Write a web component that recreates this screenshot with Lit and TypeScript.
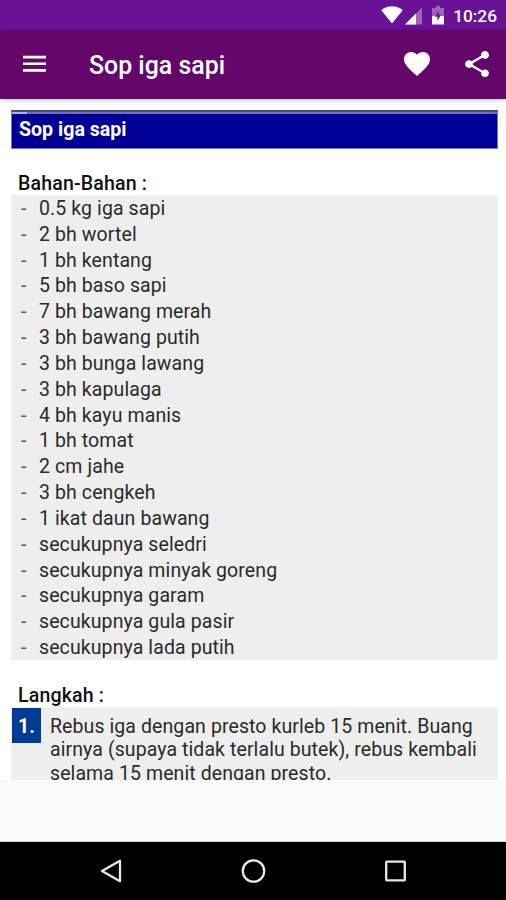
import { LitElement, html, css } from "lit";
import { customElement } from "lit/decorators.js";

const INGREDIENTS = [
  "0.5 kg iga sapi",
  "2 bh wortel",
  "1 bh kentang",
  "5 bh baso sapi",
  "7 bh bawang merah",
  "3 bh bawang putih",
  "3 bh bunga lawang",
  "3 bh kapulaga",
  "4 bh kayu manis",
  "1 bh tomat",
  "2 cm jahe",
  "3 bh cengkeh",
  "1 ikat daun bawang",
  "secukupnya seledri",
  "secukupnya minyak goreng",
  "secukupnya garam",
  "secukupnya gula pasir",
  "secukupnya lada putih",
];

const STEP_LINES = [
  "Rebus iga dengan presto kurleb 15 menit. Buang",
  "airnya (supaya tidak terlalu butek), rebus kembali",
  "selama 15 menit dengan presto.",
];

@customElement("status-bar")
class StatusBar extends LitElement {
  static styles = css`
    :host {
      display: flex;
      justify-content: flex-end;
      align-items: center;
      height: 30px;
      box-sizing: border-box;
      padding: 2px 9px 0 0;
      background: #6a1296;
      color: #fff;
    }
    svg { display: block; fill: #fff; }
    .wifi { margin: 0 2px 2px 0; }
    .signal { margin: 0 10px 0 0; }
    .battery { margin: 0 9px 2px 0; }
    .time { font-size: 17.300px; font-weight: 500; line-height: 28px; }
  `;
  render() {
    return html`
      <svg class="wifi" width="22" height="18" viewBox="0 0 22 18">
        <path d="M0.3 4.300C3 1.800 7 .3 11 .3S19 1.800 21.700 4.300L11 17.500z" />
      </svg>
      <svg class="signal" width="17" height="18" viewBox="0 0 17 18">
        <path d="M17 .5V17.500H0z" opacity=".35" />
        <path d="M11 6.500V17.500H0z" />
      </svg>
      <svg class="battery" width="12" height="19" viewBox="0 0 12 19">
        <path d="M4 0h4v2h4v8H0V2h4z" opacity=".35" />
        <path d="M0 10h12v8.500H0z" />
        <path d="M7 4.500L3 10.800H5.500V15L9 9H6.800z" fill="#6a1296" />
      </svg>
      <span class="time">10:26</span>
    `;
  }
}

@customElement("app-toolbar")
class AppToolbar extends LitElement {
  static styles = css`
    :host {
      display: flex;
      align-items: center;
      height: 69px;
      box-sizing: border-box;
      padding: 0 17px 0 23px;
      background: #64076b;
      color: #fff;
      position: relative;
      box-shadow: 0 1px 4px rgba(0, 0, 0, 0.28);
    }
    svg { display: block; fill: #fff; }
    .menu { margin-bottom: 1px; }
    .title {
      flex: 1;
      margin-left: 43px;
      font-size: 24.900px;
      font-weight: 500;
      line-height: 30px;
      white-space: nowrap;
      padding-top: 3px;
    }
    .heart { margin: 0 35px 2px 0; }
    .share { margin-bottom: 2px; }
  `;
  render() {
    return html`
      <svg class="menu" width="23" height="18" viewBox="0 0 23 18">
        <path d="M0 .7h23v2.700H0zM0 7.400h23v2.700H0zM0 14.100h23v2.700H0z" />
      </svg>
      <span class="title">Sop iga sapi</span>
      <svg class="heart" width="26" height="24" viewBox="2 3 20 18.350" preserveAspectRatio="none">
        <path d="M12 21.350l-1.450-1.320C5.400 15.360 2 12.280 2 8.500 2 5.420 4.420 3 7.500 3c1.740 0 3.410.81 4.500 2.090C13.090 3.810 14.760 3 16.500 3 19.580 3 22 5.420 22 8.500c0 3.780-3.400 6.860-8.550 11.540L12 21.350z" />
      </svg>
      <svg class="share" width="24" height="26" viewBox="3 2 18 19.920" preserveAspectRatio="none">
        <path d="M18 16.080c-.76 0-1.440.3-1.960.77L8.910 12.700c.05-.23.09-.46.09-.7s-.04-.47-.09-.7l7.050-4.110c.54.5 1.250.81 2.040.81 1.660 0 3-1.340 3-3s-1.340-3-3-3-3 1.340-3 3c0 .24.04.47.09.7L8.040 9.810C7.500 9.310 6.790 9 6 9c-1.660 0-3 1.340-3 3s1.340 3 3 3c.79 0 1.500-.31 2.040-.81l7.120 4.160c-.05.21-.08.43-.08.65 0 1.610 1.310 2.920 2.920 2.920 1.610 0 2.920-1.310 2.920-2.920s-1.310-2.920-2.920-2.920z" />
      </svg>
    `;
  }
}

@customElement("nav-bar")
class NavBar extends LitElement {
  static styles = css`
    :host {
      display: grid;
      grid-template-columns: repeat(3, 142px);
      justify-content: center;
      justify-items: center;
      align-items: center;
      height: 58px;
      background: #000;
    }
    svg { display: block; fill: none; stroke: #e8e8e8; stroke-width: 2.300; }
  `;
  render() {
    return html`
      <svg width="26" height="26" viewBox="0 0 26 26"><path d="M22 2.800V23.200L4 13z" stroke-linejoin="round" /></svg>
      <svg width="26" height="26" viewBox="0 0 26 26"><circle cx="13.500" cy="13" r="10.700" /></svg>
      <svg width="26" height="26" viewBox="0 0 26 26"><rect x="4.200" y="3.700" width="18.600" height="18.600" rx=".5" /></svg>
    `;
  }
}

@customElement("app-root")
class AppRoot extends LitElement {
  static styles = css`
    :host {
      display: flex;
      flex-direction: column;
      height: 900px;
      overflow: hidden;
      background: #fafafa;
      font-family: Roboto, "Liberation Sans", sans-serif;
      color: #2a2a2a;
    }
    .page {
      height: 681px;
      box-sizing: border-box;
      overflow: hidden;
      padding: 11px 8px 0 11px;
      background: #fff;
    }
    .banner {
      height: 39px;
      box-sizing: border-box;
      border: 1px solid #7777c4;
      border-top: 3px solid #484890;
      background: #000096;
      color: #fff;
      font-size: 19.600px;
      font-weight: 700;
      line-height: 32px;
      padding-left: 7px;
    }
    .rule { height: 2px; margin: -1px 0 0 -7px; background: #7373b0; }
    .notch { width: 15px; height: 2px; background: #b4b4dc; }
    h2 {
      margin: 0;
      padding-left: 7px;
      font-size: 19.600px;
      letter-spacing: 0.14px;
      font-weight: 500;
      height: 24px;
      line-height: 26px;
      color: #111;
    }
    .ingredients-title { margin-top: 22px; }
    .steps-title { margin-top: 23px; }
    ul {
      list-style: none;
      margin: 0;
      padding: 0;
      background: #eee;
    }
    li {
      display: flex;
      height: 25.833px;
      line-height: 27.200px;
      font-size: 19.500px;
      letter-spacing: 0.1px;
      white-space: nowrap;
    }
    .dash { width: 18px; padding-left: 10px; color: #555; }
    .step {
      display: flex;
      align-items: flex-start;
      background: #eee;
      height: 90px;
    }
    .number {
      width: 29px;
      height: 35px;
      margin: 1px 0 0 1px;
      background: #003c96;
      color: #fff;
      font-size: 19.500px;
      font-weight: 700;
      line-height: 37px;
      text-align: center;
    }
    .text {
      margin: 8px 0 0 9px;
      font-size: 19.500px;
      letter-spacing: 0.09px;
      line-height: 23.400px;
      white-space: nowrap;
    }
    .footer { flex: 1; box-sizing: border-box; border-bottom: 1px solid #d8d8d8; }
  `;
  render() {
    return html`
      <status-bar></status-bar>
      <app-toolbar></app-toolbar>
      <div class="page">
        <div class="banner">
          <div class="rule"><div class="notch"></div></div>
          Sop iga sapi
        </div>
        <h2 class="ingredients-title">Bahan-Bahan :</h2>
        <ul>
          ${INGREDIENTS.map((item) => html`<li><span class="dash">-</span><span>${item}</span></li>`)}
        </ul>
        <h2 class="steps-title">Langkah :</h2>
        <div class="step">
          <div class="number">1.</div>
          <div class="text">${STEP_LINES.map((line) => html`<div>${line}</div>`)}</div>
        </div>
      </div>
      <div class="footer"></div>
      <nav-bar></nav-bar>
    `;
  }
}
